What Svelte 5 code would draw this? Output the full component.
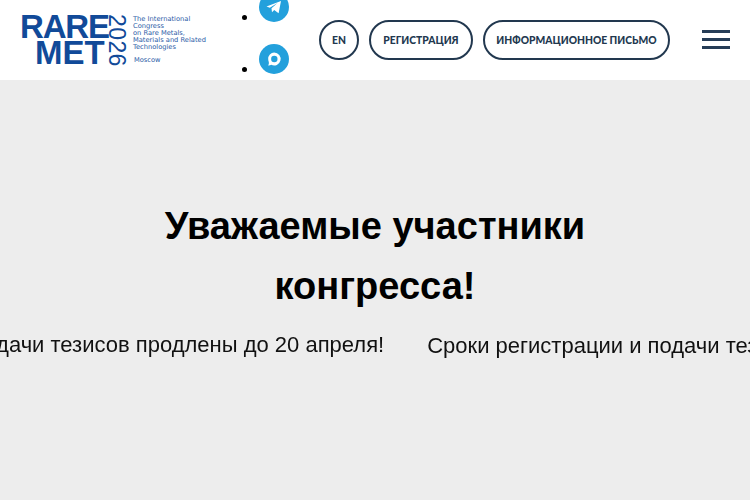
<script>
  const notice = "Сроки регистрации и подачи тезисов продлены до 20 апреля!";
</script>

<header class="header">
  <a class="logo" href="#top">
    <div class="logo-mark">
      <span class="rare">RARE</span>
      <span class="met">MET</span>
    </div>
    <span class="year">2026</span>
    <div class="logo-text">
      <span>The International</span>
      <span>Congress</span>
      <span>on Rare Metals,</span>
      <span>Materials and Related</span>
      <span>Technologies</span>
      <span class="city">Moscow</span>
    </div>
  </a>

  <ul class="socials">
    <li>
      <a href="#top" class="social" aria-label="Telegram">
        <svg viewBox="0 0 30 30" width="30" height="30">
          <circle cx="15" cy="15" r="15" fill="#23a0dc" />
          <path d="M7.500 14.600 22 9l-2.400 12.200-4.400-3.200-2.200 2.200-.5-3.900 6-5.200-7.700 4.600z" fill="#fff" />
        </svg>
      </a>
    </li>
    <li>
      <a href="#top" class="social" aria-label="Max">
        <svg viewBox="0 0 30 30" width="30" height="30">
          <circle cx="15" cy="15" r="15" fill="#23a0dc" />
          <path d="M15.200 8.500a6.500 6.500 0 1 1-3 12.300c-.8.5-2 .9-3 .7.700-1 .8-2.200.600-3.400-.400-1-.600-2-.600-3.100a6.300 6.300 0 0 1 6-6.500z" fill="#fff" />
          <circle cx="15.300" cy="15" r="3.200" fill="#23a0dc" />
        </svg>
      </a>
    </li>
  </ul>

  <nav class="actions">
    <a href="#top" class="pill round">EN</a>
    <a href="#top" class="pill reg">РЕГИСТРАЦИЯ</a>
    <a href="#top" class="pill info">ИНФОРМАЦИОННОЕ ПИСЬМО</a>
  </nav>

  <button class="burger" aria-label="Меню">
    <span></span><span></span><span></span>
  </button>
</header>

<main class="hero">
  <h1>Уважаемые участники<br />конгресса!</h1>
  <div class="marquee">
    <div class="track">
      <p>{notice}</p>
      <p class="next">{notice}</p>
    </div>
  </div>
</main>

<style>
  :global(body) {
    margin: 0;
    overflow: hidden;
    font-family: "Liberation Sans", Arial, sans-serif;
  }

  a {
    color: inherit;
    text-decoration: none;
  }

  .header {
    height: 80px;
    background: #fff;
    display: flex;
    align-items: center;
    color: #22384f;
  }

  .logo {
    display: flex;
    align-items: center;
    width: 219px;
    padding-left: 20px;
    box-sizing: border-box;
    flex-shrink: 0;
    color: #114a99;
  }

  .logo-mark {
    display: flex;
    flex-direction: column;
    font-weight: 700;
    width: 87px;
    font-size: 33px;
    line-height: 26px;
    letter-spacing: -1.2px;
  }

  .met {
    padding-left: 15px;
    letter-spacing: 0;
  }

  .year {
    writing-mode: vertical-rl;
    font-size: 23px;
    line-height: 20px;
    width: 20px;
    letter-spacing: 0.4px;
  }

  .logo-text {
    display: flex;
    flex-direction: column;
    margin-left: 6px;
    font-size: 6.7px;
    line-height: 7px;
    color: #2a5ba6;
    font-family: "DejaVu Sans", sans-serif;
  }

  .city {
    margin: 6px 0 0 1px;
  }

  .socials {
    margin: 0;
    padding: 8px 0 0 40px;
    width: 100px;
    box-sizing: border-box;
    flex-shrink: 0;
    font-size: 18px;
    color: #000;
  }

  .socials li {
    height: 52px;
  }

  .social {
    display: inline-block;
    height: 30px;
  }

  .actions {
    display: flex;
    gap: 10px;
  }

  .pill {
    height: 40px;
    box-sizing: border-box;
    border: 2px solid #22384f;
    border-radius: 20px;
    display: flex;
    align-items: center;
    justify-content: center;
    font-family: "Lato", "Open Sans", sans-serif;
    font-weight: 900;
    font-size: 10.3px;
  }

  .round {
    width: 40px;
  }

  .reg {
    width: 104px;
  }

  .info {
    width: 187px;
  }

  .burger {
    margin-left: 32px;
    width: 28px;
    padding: 0 0 2px;
    border: 0;
    background: none;
    display: flex;
    flex-direction: column;
    gap: 5px;
  }

  .burger span {
    height: 3px;
    background: #263d57;
  }

  .hero {
    height: 420px;
    background: #ededed;
    padding-top: 116px;
    box-sizing: border-box;
    overflow: hidden;
  }

  h1 {
    margin: 0;
    text-align: center;
    font-size: 38px;
    line-height: 60px;
    color: #000;
  }

  .marquee {
    margin-top: 11px;
    overflow: hidden;
  }

  .track {
    display: flex;
    gap: 43px;
    width: max-content;
    transform: translateX(-248px);
    filter: blur(0.35px);
  }

  .track p {
    margin: 0;
    font-size: 22px;
    line-height: 36px;
    color: #111;
    white-space: nowrap;
  }

  .next {
    padding-top: 1px;
  }
</style>
